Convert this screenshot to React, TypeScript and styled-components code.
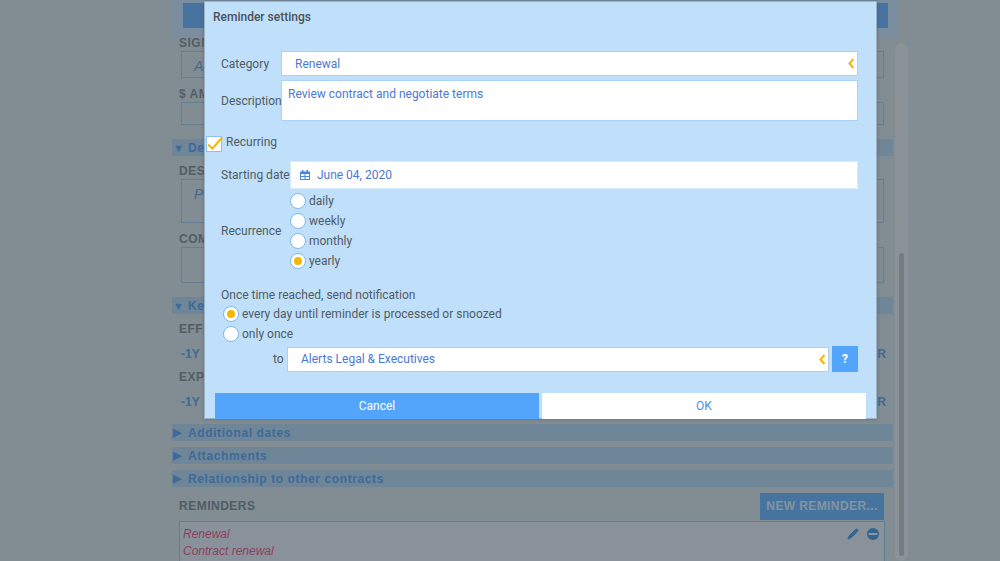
import React, { FC } from "react";
import styled, { createGlobalStyle } from "styled-components";
import { Pencil, Trash2, AlarmClock } from "lucide-react";

const Global = createGlobalStyle`
  html, body {
    margin: 0;
    height: 561px;
    overflow: hidden;
    background: #818c93;
    font-family: Roboto, "Liberation Sans", sans-serif;
  }
`;

const Arrows: FC<{ flip?: boolean }> = ({ flip }) => (
  <svg width="16" height="12" viewBox="0 0 16 12" style={flip ? { transform: "scaleX(-1)" } : undefined}>
    <path d="M8 0v12L1 6zM15 0v12L8 6z" fill="#8fa3b5" />
  </svg>
);

const Chevron: FC = () => (
  <ChevronIcon width="7" height="11" viewBox="0 0 7 11">
    <path d="M5.5 1 1.5 5.5l4 4.5" fill="none" stroke="#f5b800" strokeWidth="2" />
  </ChevronIcon>
);

const Section: FC<{ open?: boolean; title: string }> = ({ open, title }) => (
  <Band>
    <span>{open ? "▼" : "▶"}</span>
    {title}
  </Band>
);

export default function App() {
  return (
    <>
      <Global />
      <Page>
        <TopBar>
          <PagerButton>
            <Arrows />
          </PagerButton>
          <PagerButton>
            <Arrows flip />
          </PagerButton>
        </TopBar>
        <Scrollbar>
          <ScrollThumb />
        </Scrollbar>
        <Form>
          <FieldLabel>SIGNATORY</FieldLabel>
          <BackBox $height={27}>
            <i>Acme</i>
          </BackBox>
          <FieldLabel>$ AMOUNT</FieldLabel>
          <BackBox $height={23} />
          <Section open title="Description" />
          <FieldLabel>DESCRIPTION</FieldLabel>
          <BackBox $height={44}>
            <i>PPA</i>
          </BackBox>
          <FieldLabel>COMMENTS</FieldLabel>
          <BackBox $height={36} />
          <Section open title="Key dates" />
          <FieldLabel>EFFECTIVE DATE</FieldLabel>
          <DateRow>
            <span>-1Y</span>
            <span>R</span>
          </DateRow>
          <FieldLabel>EXPIRY DATE</FieldLabel>
          <DateRow>
            <span>-1Y</span>
            <span>R</span>
          </DateRow>
          <Bands>
            <Section title="Additional dates" />
            <Section title="Attachments" />
            <Section title="Relationship to other contracts" />
          </Bands>
          <RemindersHead>
            <RemindersTitle>REMINDERS</RemindersTitle>
            <NewReminder>NEW REMINDER...</NewReminder>
          </RemindersHead>
          <ReminderBox>
            <ReminderLine>
              Renewal
              <RowIcons>
                <Pencil size={12} fill="#33658f" strokeWidth={1.5} />
                <StopSign />
              </RowIcons>
            </ReminderLine>
            <ReminderLine>Contract renewal</ReminderLine>
            <ReminderLine>
              3 months before Expiry Date
              <RowIcons>
                <AlarmClock size={13} strokeWidth={2} />
                <Trash2 size={12} strokeWidth={1.5} />
              </RowIcons>
            </ReminderLine>
          </ReminderBox>
        </Form>
      </Page>

      <Dialog>
        <DialogTitle>Reminder settings</DialogTitle>
        <Row $top={16}>
          <Label $width={60}>Category</Label>
          <SelectBox $width={577} $height={25} $indent={13}>
            Renewal
            <Chevron />
          </SelectBox>
        </Row>
        <Row $top={4}>
          <Label $width={60}>Description</Label>
          <TextBox>Review contract and negotiate terms</TextBox>
        </Row>
        <CheckRow>
          <CheckBox>
            <svg width="18" height="16" viewBox="0 0 18 16">
              <path d="M2 9.5 6.5 13.5 16 2.5" fill="none" stroke="#f5b800" strokeWidth="2" />
            </svg>
          </CheckBox>
          <PlainText>Recurring</PlainText>
        </CheckRow>
        <Row $top={9}>
          <Label $width={69}>Starting date</Label>
          <DateBox>
            <svg width="10" height="10" viewBox="0 0 10 10">
              <path d="M0 1.5h10V10H0zM1 4v2h3.5V4zM5.500 4v2H9V4zM1 7v2h3.500V7zM5.500 7v2H9V7z" fill="#4a86e0" fillRule="evenodd" />
              <path d="M2 0h1.500v2H2zM6.500 0H8v2H6.500z" fill="#4a86e0" />
            </svg>
            June 04, 2020
          </DateBox>
        </Row>
        <RecurrenceRow>
          <Label $width={69}>Recurrence</Label>
          <RadioList>
            {["daily", "weekly", "monthly", "yearly"].map((name) => (
              <RadioRow key={name}>
                <Radio $on={name === "yearly"} />
                <PlainText>{name}</PlainText>
              </RadioRow>
            ))}
          </RadioList>
        </RecurrenceRow>
        <NotifyTitle>Once time reached, send notification</NotifyTitle>
        <NotifyList>
          <RadioRow>
            <Radio $on />
            <PlainText>every day until reminder is processed or snoozed</PlainText>
          </RadioRow>
          <RadioRow>
            <Radio />
            <PlainText>only once</PlainText>
          </RadioRow>
        </NotifyList>
        <ToRow>
          <ToLabel>to</ToLabel>
          <SelectBox $width={542} $height={25} $indent={13}>
            Alerts Legal &amp; Executives
            <Chevron />
          </SelectBox>
          <HelpButton>?</HelpButton>
        </ToRow>
        <Actions>
          <ActionButton $primary>Cancel</ActionButton>
          <ActionButton>OK</ActionButton>
        </Actions>
      </Dialog>
    </>
  );
}

const StopSign: FC = () => (
  <svg width="12" height="12" viewBox="0 0 12 12">
    <circle cx="6" cy="6" r="6" fill="#33658f" />
    <path d="M1.500 5h9v2h-9z" fill="#8a98a3" />
  </svg>
);

const Page = styled.div`
  position: relative;
  width: 1000px;
  height: 561px;
  overflow: hidden;
`;
const TopBar = styled.div`
  position: absolute;
  top: 0;
  left: 172px;
  width: 725px;
  height: 38px;
  padding: 3px 9px 0 11px;
  box-sizing: border-box;
  background: #7a8e9f;
  display: flex;
  justify-content: space-between;
  align-items: flex-start;
`;
const PagerButton = styled.div`
  width: 60px;
  height: 25px;
  background: #46749f;
  display: flex;
  align-items: center;
  justify-content: center;
`;
const Scrollbar = styled.div`
  position: absolute;
  top: 43px;
  left: 895px;
  width: 13px;
  height: 518px;
  border-radius: 7px;
  background: #8b9397;
`;
const ScrollThumb = styled.div`
  position: absolute;
  top: 210px;
  left: 4px;
  width: 5px;
  height: 303px;
  border-radius: 3px;
  background: #6f7f82;
`;
const Form = styled.div`
  position: absolute;
  top: 36px;
  left: 172px;
  width: 721px;
  display: flex;
  flex-direction: column;
`;
const FieldLabel = styled.div`
  height: 15px;
  margin: 0 0 0 7px;
  font: bold 12px "Liberation Sans", sans-serif;
  line-height: 15px;
  letter-spacing: 0.5px;
  color: #525e66;
`;
const BackBox = styled.div<{ $height: number }>`
  height: ${(p) => p.$height}px;
  margin: 0 9px 9px 9px;
  box-sizing: border-box;
  border: 1px solid #667f93;
  outline: 1px solid #7f8c94;
  padding: 6px 12px;
  font: 14px "Liberation Sans", sans-serif;
  color: #46688e;
`;
const Band = styled.div`
  height: 17px;
  margin: 5px 0 8px 0;
  padding-left: 1px;
  display: flex;
  align-items: center;
  gap: 5px;
  background: #6e8698;
  font: bold 12px "Liberation Sans", sans-serif;
  letter-spacing: 0.6px;
  color: #3f6a99;
  span {
    font-size: 11px;
    width: 10px;
  }
`;
const DateRow = styled.div`
  height: 33px;
  padding: 0 7px 0 9px;
  display: flex;
  justify-content: space-between;
  align-items: center;
  font: bold 12px "Liberation Sans", sans-serif;
  color: #3f6a99;
`;
const Bands = styled.div`
  margin-top: 6px;
  display: flex;
  flex-direction: column;
  ${Band} {
    margin: 0 0 6px 0;
  }
`;
const RemindersHead = styled.div`
  height: 28px;
  margin: -1px 9px 0 7px;
  display: flex;
  align-items: center;
  justify-content: space-between;
`;
const RemindersTitle = styled.div`
  font: bold 12px "Liberation Sans", sans-serif;
  letter-spacing: 0.5px;
  color: #4f5d63;
`;
const NewReminder = styled.div`
  width: 124px;
  height: 27px;
  background: #46749f;
  color: #84949f;
  font: bold 12px "Liberation Sans", sans-serif;
  letter-spacing: 0.4px;
  display: flex;
  align-items: center;
  justify-content: center;
`;
const ReminderBox = styled.div`
  margin: 1px 8px 0 7px;
  height: 70px;
  padding: 3px 3px;
  border: 1px solid #5f7f97;
  background: #89929a;
`;
const ReminderLine = styled.div`
  position: relative;
  height: 17.500px;
  display: flex;
  align-items: center;
  justify-content: space-between;
  font: italic 12px "Liberation Sans", sans-serif;
  color: #8f3f61;
`;
const RowIcons = styled.div`
  display: flex;
  gap: 8px;
  padding-right: 2px;
  color: #33658f;
`;
const Dialog = styled.div`
  position: absolute;
  top: 1px;
  left: 204px;
  width: 673px;
  height: 418px;
  box-sizing: border-box;
  border: 1px solid #9cb1c2;
  background: #bfdffb;
  box-shadow: 0 0 3px rgba(60, 80, 95, 0.5);
  font-size: 12px;
  color: #4f5b63;
`;
const DialogTitle = styled.div`
  height: 25px;
  padding: 8px 0 0 8px;
  font-weight: 500;
  font-size: 12px;
  line-height: 14px;
  color: #4a5258;
`;
const Row = styled.div<{ $top: number }>`
  margin: ${(p) => p.$top}px 18px 0 16px;
  display: flex;
  align-items: center;
`;
const Label = styled.div<{ $width: number }>`
  width: ${(p) => p.$width}px;
  line-height: 14px;
  white-space: nowrap;
`;
const SelectBox = styled.div<{ $width: number; $height: number; $indent: number }>`
  position: relative;
  width: ${(p) => p.$width}px;
  height: ${(p) => p.$height}px;
  box-sizing: border-box;
  padding-left: ${(p) => p.$indent}px;
  border: 1px solid #b8cfe0;
  background: #fff;
  display: flex;
  align-items: center;
  color: #4c78d4;
`;
const ChevronIcon = styled.svg`
  position: absolute;
  right: 2px;
  top: 6px;
`;
const TextBox = styled.div`
  width: 577px;
  height: 41px;
  box-sizing: border-box;
  padding: 6px 6px;
  border: 1px solid #a9d2f7;
  background: #fff;
  color: #4c78d4;
  line-height: 14px;
`;
const CheckRow = styled.div`
  margin: 14px 0 0 1px;
  display: flex;
  align-items: flex-start;
  gap: 4px;
`;
const CheckBox = styled.div`
  width: 16px;
  height: 16px;
  margin-top: 1px;
  box-sizing: border-box;
  border: 1px solid #8cc0f2;
  background: #fff;
  svg {
    margin: -2px 0 0 -1px;
    display: block;
  }
`;
const PlainText = styled.span`
  line-height: 14px;
  white-space: nowrap;
`;
const DateBox = styled.div`
  margin-left: 0;
  width: 569px;
  height: 28px;
  box-sizing: border-box;
  padding-left: 9px;
  border: 1px solid #d8ebfb;
  background: #fff;
  display: flex;
  align-items: center;
  gap: 7px;
  color: #4c78d4;
`;
const RecurrenceRow = styled(Row).attrs({ $top: 2 })``;
const RadioList = styled.div`
  display: flex;
  flex-direction: column;
`;
const RadioRow = styled.div`
  height: 20px;
  display: flex;
  align-items: center;
  gap: 3px;
  line-height: 14px;
`;
const Radio = styled.span<{ $on?: boolean }>`
  width: 16px;
  height: 16px;
  box-sizing: border-box;
  border-radius: 50%;
  border: 1px solid #7db8f2;
  background: #fff;
  display: flex;
  align-items: center;
  justify-content: center;
  &::after {
    content: "";
    width: 8px;
    height: 8px;
    border-radius: 50%;
    background: ${(p) => (p.$on ? "#f5b800" : "transparent")};
  }
`;
const NotifyTitle = styled.div`
  margin: 17px 0 0 16px;
  line-height: 14px;
`;
const NotifyList = styled.div`
  margin: 2px 0 0 18px;
  display: flex;
  flex-direction: column;
`;
const ToRow = styled.div`
  margin: 2px 0 0 0;
  padding-left: 68px;
  display: flex;
  align-items: center;
`;
const ToLabel = styled.span`
  width: 14px;
`;
const HelpButton = styled.div`
  width: 26px;
  height: 26px;
  margin-left: 3px;
  background: #53a5fb;
  color: #fff;
  font: bold 12px Roboto, sans-serif;
  display: flex;
  align-items: center;
  justify-content: center;
`;
const Actions = styled.div`
  margin: 21px 10px 0 10px;
  display: flex;
  gap: 3px;
`;
const ActionButton = styled.div<{ $primary?: boolean }>`
  width: 324px;
  height: 26px;
  background: ${(p) => (p.$primary ? "#53a5fb" : "#fff")};
  color: ${(p) => (p.$primary ? "#fff" : "#4c8fe8")};
  display: flex;
  align-items: center;
  justify-content: center;
`;
